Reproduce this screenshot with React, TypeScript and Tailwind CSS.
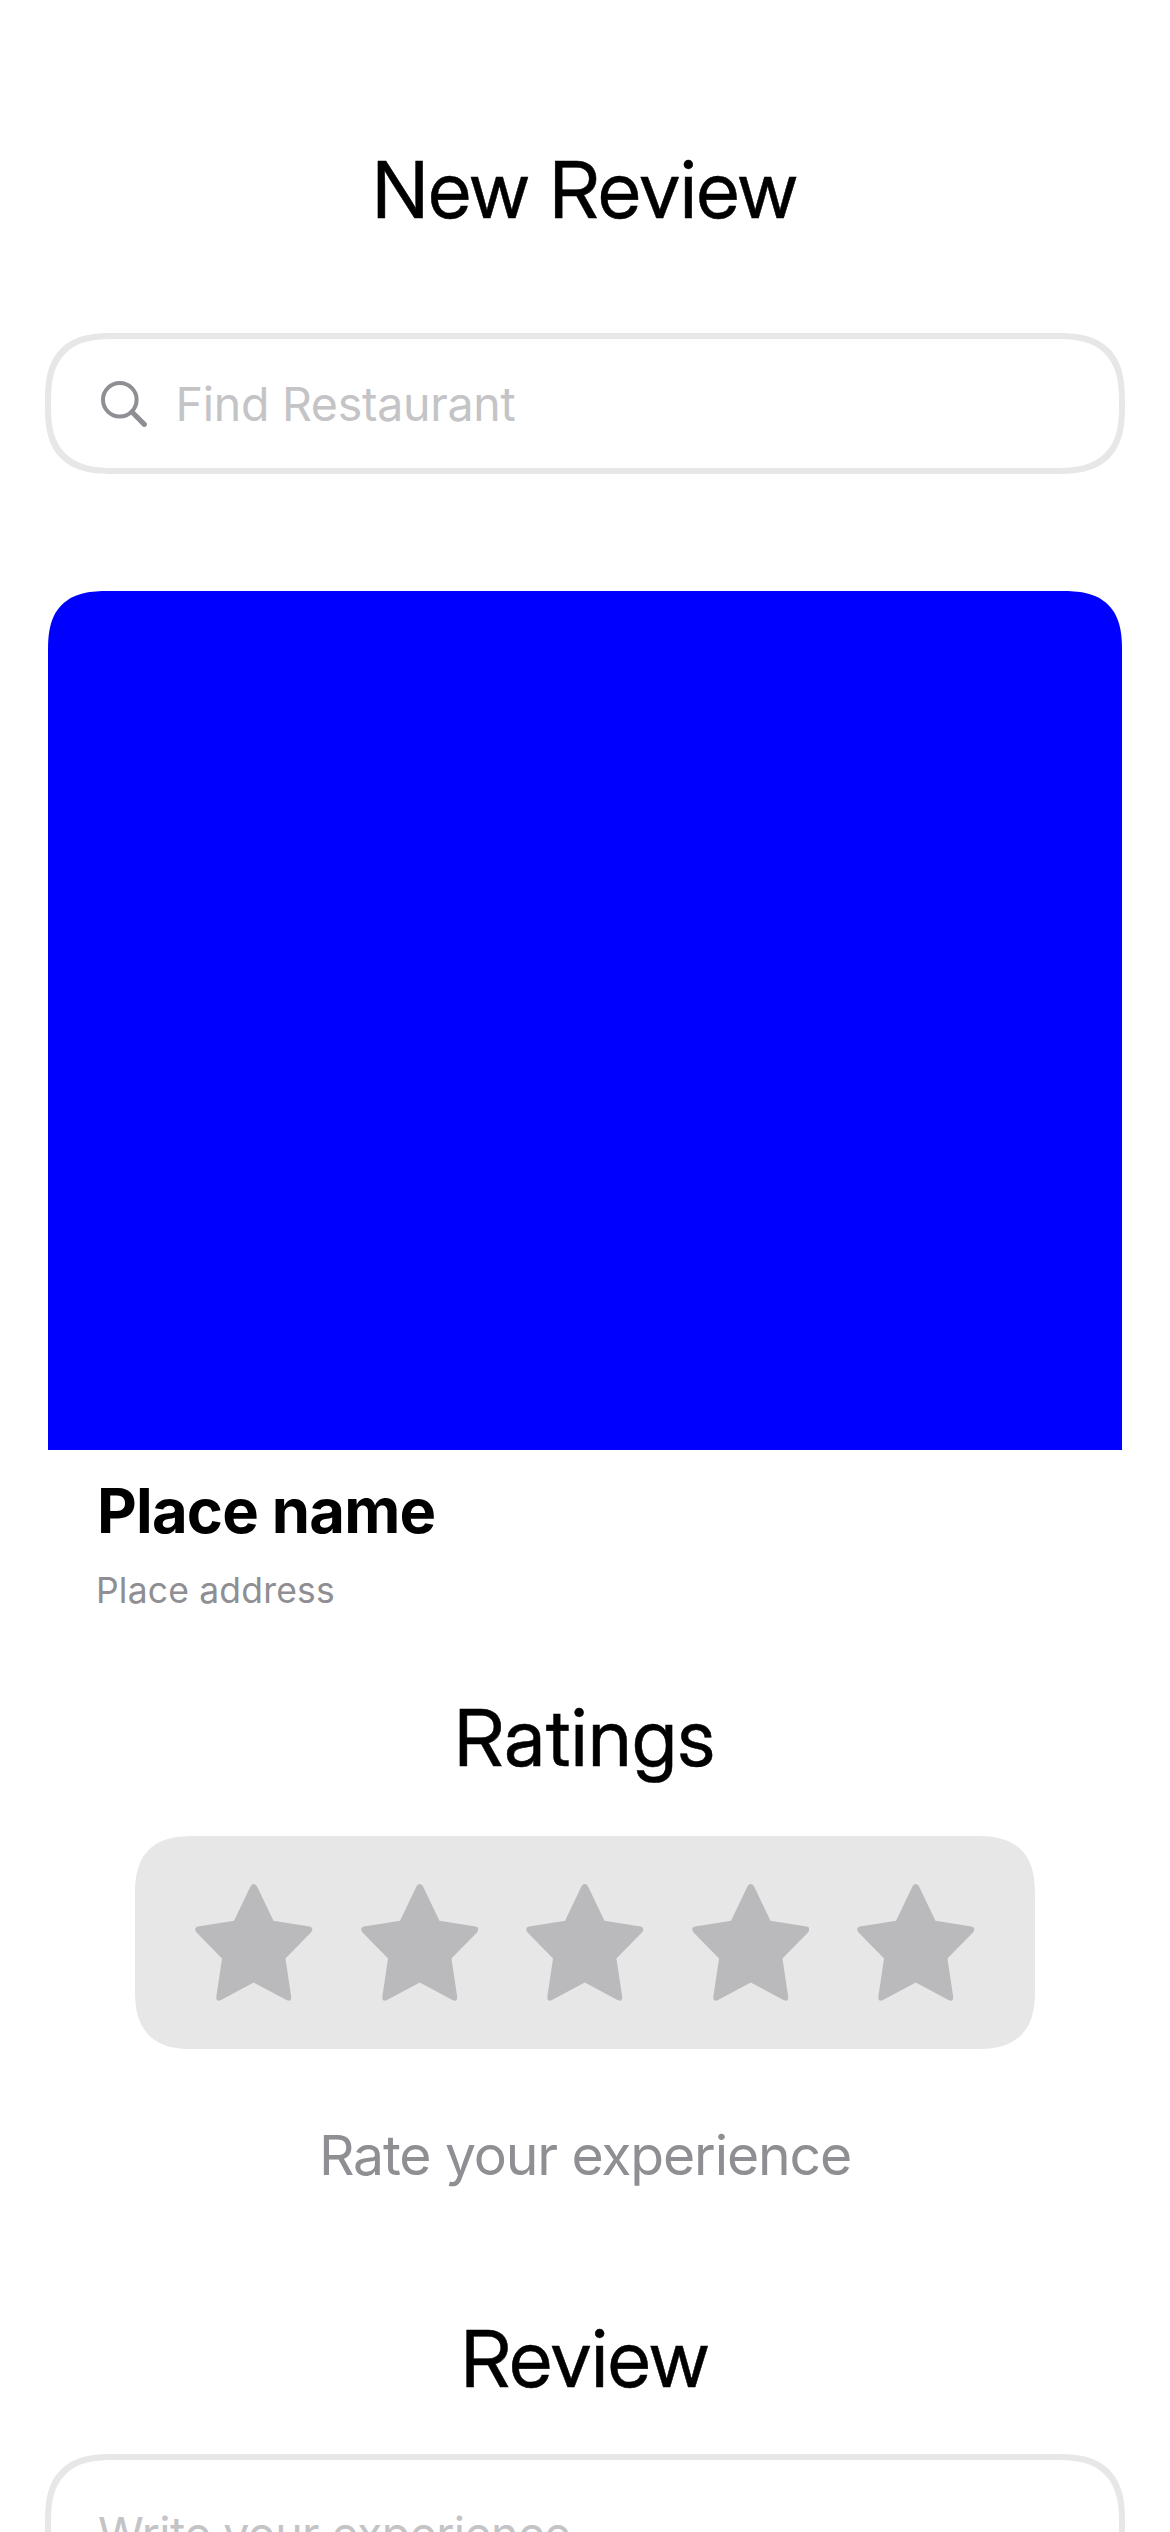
function Star() {
  return (
    <svg viewBox="225 191 352 350" className="h-[117px] w-[117.5px] fill-[#bababc]" aria-hidden="true">
      <path d="M391 198Q401 184 411 198L460 301L568 318Q582 321 573 335L496 414L513 528Q514 546 499 538L401 486L303 538Q288 546 289 528L306 414L229 335Q220 321 234 318L342 301Z" />
    </svg>
  );
}

export default function App() {
  return (
    <main className="flex h-[2532px] w-[1170px] flex-col overflow-hidden bg-white px-[45px] pt-[141px] font-[Inter,sans-serif] text-black">
      <h1 className="text-center font-['Inter_Display',Inter,sans-serif] text-[79px] leading-[96px] tracking-[0.33px] [-webkit-text-stroke:0.5px_#000]">
        New Review
      </h1>
      <div className="mt-24 flex h-[141px] shrink-0 items-center gap-[28.5px] rounded-[68px] border-6 border-[#e7e7e7] pl-[50px] [corner-shape:superellipse(1.4)]">
        <svg viewBox="0 0 46 46" className="size-[46px] fill-none stroke-[#8e8e93]" aria-hidden="true">
          <circle cx="18.8" cy="18.8" r="16.8" strokeWidth="4" />
          <path d="M31 31L43.3 43.3" strokeWidth="5.2" strokeLinecap="round" />
        </svg>
        <span className="text-[46.5px] leading-[56px] tracking-[-0.27px] text-[#c4c4c6]">Find Restaurant</span>
      </div>
      <section className="mx-[3px] mt-[117px] shrink-0">
        <div className="h-[859px] rounded-t-[60px] bg-[#0000ff] [corner-shape:superellipse(1.4)]" />
        <h2 className="mt-6 pl-[49px] text-[61.5px] leading-[74px] font-bold tracking-[-0.8px]">Place name</h2>
        <p className="mt-[21px] pl-12 text-[35.5px] leading-[43px] tracking-[0.18px] text-[#8e8e93]">Place address</p>
      </section>
      <h2 className="mt-[77px] text-center font-['Inter_Display',Inter,sans-serif] text-[79px] leading-[96px] tracking-[0.78px] [-webkit-text-stroke:0.5px_#000]">
        Ratings
      </h2>
      <div className="mt-[51px] flex h-[213px] w-[900px] shrink-0 items-center justify-center gap-12 self-center rounded-[60px] bg-[#e7e7e7] [corner-shape:superellipse(1.4)]">
        {[1, 2, 3, 4, 5].map((n) => (
          <Star key={n} />
        ))}
      </div>
      <p className="mt-[73px] text-center text-[55.3px] leading-[66px] tracking-[-1.14px] text-[#8e8e93]">
        Rate your experience
      </p>
      <h2 className="mt-[122px] text-center font-['Inter_Display',Inter,sans-serif] text-[79px] leading-[96px] tracking-[0.33px] [-webkit-text-stroke:0.5px_#000]">
        Review
      </h2>
      <div className="mt-12 h-[360px] shrink-0 rounded-[68px] border-6 border-[#e7e7e7] pt-[46px] pl-[47px] [corner-shape:superellipse(1.4)]">
        <p className="text-[46.5px] leading-[56px] tracking-[-0.58px] text-[#c4c4c6]">Write your experience</p>
      </div>
    </main>
  );
}
